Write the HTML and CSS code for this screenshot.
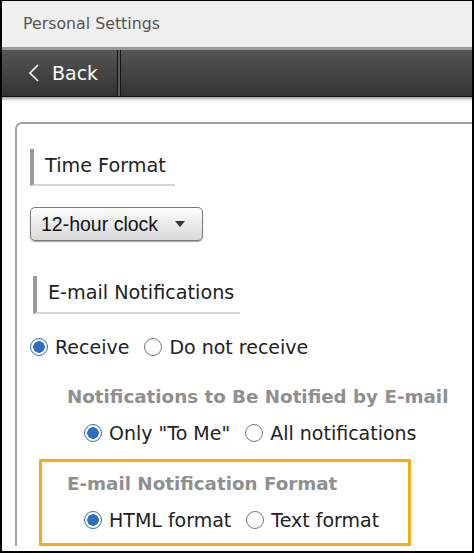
FILE: index.html
```html
<!DOCTYPE html>
<html lang="en">
<head>
  <meta charset="UTF-8">
  <title>Personal Settings</title>
  <link rel="stylesheet" href="styles.css">
</head>
<body>

  <div class="frame">
    <div class="title-bar">Personal Settings</div>
    <div class="tool-bar">
      <a class="back" href="#">
        <svg width="12" height="18" viewBox="0 0 12 18"><path d="M10 1 L2 9 L10 17" fill="none" stroke="#fff" stroke-width="1.6"/></svg>
        <span>Back</span>
      </a>
    </div>
    <div class="shadow"></div>

    <div class="content">
      <div class="panel">
        <div class="heading">Time Format</div>
        <div class="select">
          <span>12-hour clock</span>
          <span class="arrow"></span>
        </div>

        <div class="heading heading-wide">E-mail Notifications</div>
        <div class="options">
          <label class="radio checked">Receive</label>
          <label class="radio">Do not receive</label>
        </div>

        <div class="sub">
          <div class="sub-title">Notifications to Be Notified by E-mail</div>
          <div class="options">
            <label class="radio checked">Only "To Me"</label>
            <label class="radio">All notifications</label>
          </div>
        </div>

        <div class="sub highlight">
          <div class="sub-title">E-mail Notification Format</div>
          <div class="options">
            <label class="radio checked">HTML format</label>
            <label class="radio">Text format</label>
          </div>
        </div>
      </div>
    </div>
  </div>

</body>
</html>
```

FILE: styles.css
```css
html, body {
  margin: 0;
  height: 100%;
}

body {
  background: #000;
  font-family: 'DejaVu Sans', sans-serif;
  color: #222;
}

.frame {
  box-sizing: border-box;
  height: 553px;
  border-top: 1px solid #000;
  border-left: 2px solid #000;
  border-right: 2px solid #000;
  border-bottom: 2px solid #000;
  background: #fff;
  overflow: hidden;
}

.title-bar {
  height: 46px;
  line-height: 45px;
  padding-left: 21px;
  background: #efefed;
  color: #555;
  font-size: 15.8px;
  border-bottom: 3px solid #9a9a9a;
}

.tool-bar {
  height: 46px;
  background: linear-gradient(#555, #333);
  border-bottom: 1px solid #111;
  display: flex;
}

.back {
  width: 116px;
  display: flex;
  align-items: center;
  gap: 12px;
  padding-left: 26px;
  box-sizing: border-box;
  color: #fff;
  text-decoration: none;
  font-size: 19px;
  border-right: 1px solid #111;
  box-shadow: 1px 0 0 #5c5c5c, 2px 0 0 #5c5c5c, 3px 0 0 #151515;
}

.shadow {
  height: 4px;
  background: linear-gradient(#9c9c9c, #fff);
}

.content {
  padding: 21px 0 0 13px;
}

.panel {
  border-top: 2px solid #a3a3a3;
  border-left: 2px solid #a3a3a3;
  border-top-left-radius: 7px;
  padding: 25px 0 0 13px;
}

.heading {
  width: 130px;
  height: 35px;
  line-height: 34px;
  border-left: 4px solid #9a9a9a;
  border-bottom: 2px solid #d8d5cf;
  padding-left: 11px;
  font-size: 19.2px;
}

.heading-wide {
  width: 192px;
  height: 36px;
  margin-left: 3px;
}

.select {
  margin: 21px 0 35px;
  width: 173px;
  height: 34px;
  box-sizing: border-box;
  border: 1px solid #7b7b7b;
  border-radius: 5px;
  background: linear-gradient(#fdfdfd, #e9e9e9 55%, #d9d9d9);
  box-shadow: 0 1px 1px rgba(0,0,0,0.35);
  display: flex;
  align-items: center;
  justify-content: space-between;
  padding: 0 17px 0 10px;
  font-family: 'Liberation Sans', Arial, sans-serif;
  font-size: 19.5px;
  color: #111;
}

.arrow {
  width: 0;
  height: 0;
  border-left: 5px solid transparent;
  border-right: 5px solid transparent;
  border-top: 6px solid #333;
}

.options {
  display: flex;
  gap: 15px;
  height: 30px;
  align-items: center;
  margin-top: 18px;
  font-size: 19px;
  white-space: nowrap;
}

.radio {
  display: flex;
  align-items: center;
  gap: 7px;
  flex-shrink: 0;
}

.radio::before {
  content: "";
  width: 18px;
  height: 18px;
  box-sizing: border-box;
  border-radius: 50%;
  border: 1px solid #777;
  background: #fff;
}

.radio.checked::before {
  border: 1.5px solid #2a6fc0;
  background: radial-gradient(circle, #2a6fc0 0, #2a6fc0 5.5px, #fff 6px);
}

.sub {
  margin: 10px 0 0 9px;
  width: 372px;
  border: 3px solid transparent;
  padding: 9px 0 8px 25px;
  box-sizing: border-box;
}

.sub.highlight {
  margin-top: 0;
  border-color: #f2ae12;
}

.sub-title {
  height: 26px;
  line-height: 26px;
  font-size: 18.3px;
  font-weight: bold;
  color: #8f8f8f;
  white-space: nowrap;
}

.sub .options {
  margin: 8px 0 0 17px;
}
```
